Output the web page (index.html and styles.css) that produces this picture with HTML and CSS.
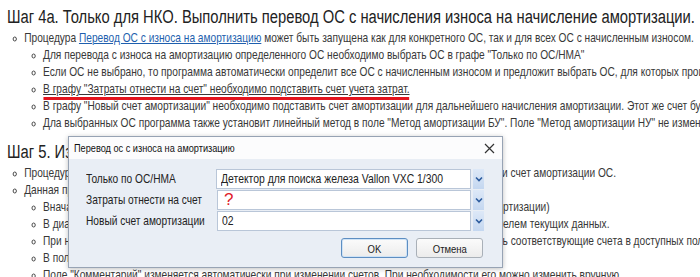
FILE: index.html
```html
<!DOCTYPE html>
<html lang="ru">
<head>
    <meta charset="UTF-8">
    <title>Перевод ОС с износа на амортизацию</title>
    <link rel="stylesheet" href="styles.css">
</head>
<body>
    <div class="page">
        <h2>Шаг 4а. Только для НКО. Выполнить перевод ОС с начисления износа на начисление амортизации.</h2>
        <ul class="list">
            <li>Процедура <a href="#">Перевод ОС с износа на амортизацию</a> может быть запущена как для конкретного ОС, так и для всех ОС с начисленным износом.
                <ul class="sub">
                    <li>Для перевода с износа на амортизацию определенного ОС необходимо выбрать ОС в графе "Только по ОС/НМА"</li>
                    <li>Если ОС не выбрано, то программа автоматически определит все ОС с начисленным износом и предложит выбрать ОС, для которых производится перевод.</li>
                    <li><span class="marked">В графу "Затраты отнести на счет" необходимо подставить счет учета затрат.</span></li>
                    <li>В графу "Новый счет амортизации" необходимо подставить счет амортизации для дальнейшего начисления амортизации. Этот же счет будет установлен в поле.</li>
                    <li>Дла выбранных ОС программа также установит линейный метод в поле "Метод амортизации БУ". Поле "Метод амортизации НУ" не изменяется.</li>
                </ul>
            </li>
        </ul>

        <h2 class="step5">Шаг 5. Изменение счетов учета ОС</h2>
        <ul class="list">
            <li>Процедура Изменение счетов учета ОС позволяет изменить счет учета ОС, счет начисления износа и счет амортизации ОС.</li>
            <li>Данная процедура выполняется так:
                <ul class="sub">
                    <li>Вначале выбирается ОС (по умолчанию будут выбраны все ОС с начисленным износом для амортизации)</li>
                    <li>В диалоге будут показаны счета учета ОС, установленные в программе по умолчанию пользователем текущих данных.</li>
                    <li>При необходимости изменения счетов учета и амортизации для ОС пользователь должен указать соответствующие счета в доступных полях.</li>
                    <li>В поле "Дата" указывается дата изменения.</li>
                    <li>Поле "Комментарий" изменяется автоматически при изменении счетов. При необходимости его можно изменить вручную.</li>
                </ul>
            </li>
        </ul>
    </div>

    <div class="dialog">
        <div class="dialog-title">
            <span class="sq">Перевод ос с износа на амортизацию</span>
            <svg class="close" width="11" height="11" viewBox="0 0 11 11"><path d="M1 1 L10 10 M10 1 L1 10" stroke="#333" stroke-width="1.2"/></svg>
        </div>
        <div class="dialog-body">
            <div class="row">
                <label><span class="sq">Только по ОС/НМА</span></label>
                <div class="field"><span class="sq">Детектор для поиска железа Vallon VXC 1/300</span></div>
                <div class="drop"><svg width="8" height="6" viewBox="0 0 8 6"><path d="M1 1.5 L4 4.5 L7 1.5" fill="none" stroke="#2d5c9e" stroke-width="1.6"/></svg></div>
            </div>
            <div class="row">
                <label><span class="sq">Затраты отнести на счет</span></label>
                <div class="field"><span class="question">?</span></div>
                <div class="drop"><svg width="8" height="6" viewBox="0 0 8 6"><path d="M1 1.5 L4 4.5 L7 1.5" fill="none" stroke="#2d5c9e" stroke-width="1.6"/></svg></div>
            </div>
            <div class="row">
                <label><span class="sq">Новый счет амортизации</span></label>
                <div class="field"><span class="sq">02</span></div>
                <div class="drop"><svg width="8" height="6" viewBox="0 0 8 6"><path d="M1 1.5 L4 4.5 L7 1.5" fill="none" stroke="#2d5c9e" stroke-width="1.6"/></svg></div>
            </div>
            <div class="buttons">
                <button class="btn ok"><span class="sq mid">OK</span></button>
                <button class="btn"><span class="sq mid">Отмена</span></button>
            </div>
        </div>
    </div>
</body>
</html>
```

FILE: styles.css
```css
body {
    margin: 0;
    background: #fff;
    font-family: "Liberation Sans", Arial, sans-serif;
    color: #383838;
    width: 700px;
    height: 277px;
    overflow: hidden;
    position: relative;
}

/* the text in the shot is narrower than Arial, so squeeze it */
.page {
    width: 860px;
    padding: 6px 0 0 8.5px;
    transform: scaleX(0.82);
    transform-origin: 0 0;
}

.sq {
    display: inline-block;
    transform: scaleX(0.82);
    transform-origin: 0 50%;
}

.sq.mid {
    transform-origin: 50% 50%;
}

h2 {
    margin: 0;
    font-size: 18px;
    font-weight: normal;
    color: #222;
    line-height: 22px;
    white-space: nowrap;
}

.step5 {
    margin-top: 9px;
}

.list {
    margin: 2px 0 0 0;
    padding-left: 21px;
    list-style-type: circle;
    font-size: 12.4px;
}

.list li {
    line-height: 17px;
    white-space: nowrap;
}

.sub {
    margin: 0;
    padding-left: 23px;
    list-style-type: circle;
}

a {
    color: #1e5fae;
}

.marked {
    text-decoration: underline;
    border-bottom: 3px solid #e3141e;
    padding-bottom: 1px;
}

.dialog {
    position: absolute;
    left: 68px;
    top: 136px;
    width: 433px;
    height: 130px;
    border: 1px solid #97a3b4;
    background: #e9eef5;
    box-shadow: 0 1px 5px rgba(0, 0, 0, 0.25);
    color: #222;
}

.dialog-title {
    height: 22px;
    background: #fcfcfd;
    display: flex;
    align-items: center;
    justify-content: space-between;
    padding: 0 7px 0 5px;
    font-size: 11.2px;
    color: #111;
}

.dialog-body {
    padding: 10px 18px 0 17px;
}

.row {
    display: flex;
    align-items: center;
    height: 20px;
    margin-bottom: 1px;
    font-size: 12.4px;
    white-space: nowrap;
}

.row label {
    width: 131px;
}

.field {
    width: 250px;
    height: 18px;
    background: #fff;
    border: 1px solid #b9c6d8;
    padding-left: 4px;
    line-height: 18px;
    overflow: hidden;
    font-size: 12.7px;
}

.question {
    color: #e0202a;
    font-size: 17px;
    padding-left: 2px;
}

.drop {
    width: 11px;
    height: 20px;
    margin-left: 2px;
    background: linear-gradient(#dde8f7, #c4d7f0);
    display: flex;
    align-items: center;
    justify-content: center;
}

.buttons {
    display: flex;
    justify-content: flex-end;
    gap: 8px;
    margin-top: 7px;
    padding-right: 1px;
}

.btn {
    width: 67px;
    height: 20px;
    border: 1px solid #a9b0b8;
    border-radius: 3px;
    background: linear-gradient(#fbfbfb, #ececec);
    font-family: inherit;
    font-size: 11.6px;
    color: #222;
    padding: 0;
}

.ok {
    border-color: #5d8ec2;
    box-shadow: inset 0 0 0 1px #cfe3f6;
}
```
